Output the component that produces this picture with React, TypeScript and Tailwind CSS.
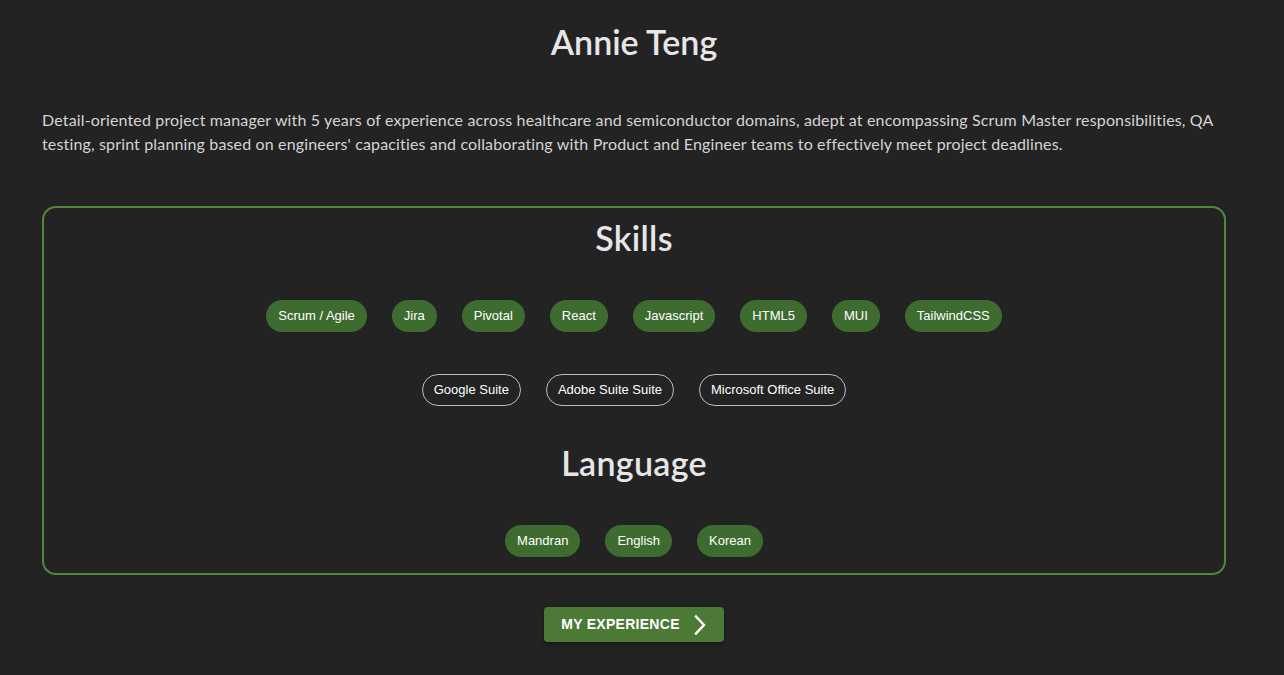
const skills = ['Scrum / Agile', 'Jira', 'Pivotal', 'React', 'Javascript', 'HTML5', 'MUI', 'TailwindCSS'];
const tools = ['Google Suite', 'Adobe Suite Suite', 'Microsoft Office Suite'];
const languages = ['Mandran', 'English', 'Korean'];

function Chip({ label, outlined = false }: { label: string; outlined?: boolean }) {
  return (
    <div
      className={`h-8 rounded-full flex items-center text-[13px] text-white font-['Liberation_Sans',Arial,sans-serif] ${
        outlined ? 'border border-[#bdbdbd] px-[11px]' : 'bg-[#3e6b2f] px-3'
      }`}
    >
      {label}
    </div>
  );
}

export default function App() {
  return (
    <div className="min-h-screen bg-[#232323] text-[#e6e6e6] font-['Lato','Noto_Sans',sans-serif] pl-[42px] pr-[58px] pt-[21px] pb-8">
      <h1 className="text-center text-[34px] leading-[42px] font-semibold">Annie Teng</h1>

      <p className="mt-[45px] text-[16px] leading-[24px] tracking-[0.15px] text-[#d4d4d4]">
        Detail-oriented project manager with 5 years of experience across healthcare and semiconductor domains, adept at encompassing Scrum Master responsibilities, QA testing, sprint planning based on engineers' capacities and collaborating with Product and Engineer teams to effectively meet project deadlines.
      </p>

      <section className="mt-[50px] border-2 border-[#4f8a3c] rounded-[14px] pt-[9px] pb-4">
        <h2 className="text-center text-[34px] leading-[42px] font-semibold tracking-[0.3px]">Skills</h2>
        <div className="mt-[41px] flex justify-center gap-[25px]">
          {skills.map((s) => (
            <Chip key={s} label={s} />
          ))}
        </div>
        <div className="mt-[42px] flex justify-center gap-[25px]">
          {tools.map((s) => (
            <Chip key={s} label={s} outlined />
          ))}
        </div>

        <h2 className="mt-[36px] text-center text-[34px] leading-[42px] font-semibold tracking-[0.3px]">Language</h2>
        <div className="mt-[41px] flex justify-center gap-[25px]">
          {languages.map((s) => (
            <Chip key={s} label={s} />
          ))}
        </div>
      </section>

      <div className="mt-[32px] flex justify-center">
        <button className="h-[35px] w-[180px] rounded bg-[#4a7a35] shadow-[0_2px_4px_rgba(0,0,0,0.4)] flex items-center justify-center gap-[13px] text-white text-[14px] font-bold tracking-[0.02em] font-['Liberation_Sans',Arial,sans-serif]">
          MY EXPERIENCE
          <svg width="14" height="22" viewBox="0 0 14 22" fill="none" stroke="currentColor" strokeWidth="2.4" strokeLinecap="square">
            <path d="M3 2.5 L11 11 L3 19.5" />
          </svg>
        </button>
      </div>
    </div>
  );
}
